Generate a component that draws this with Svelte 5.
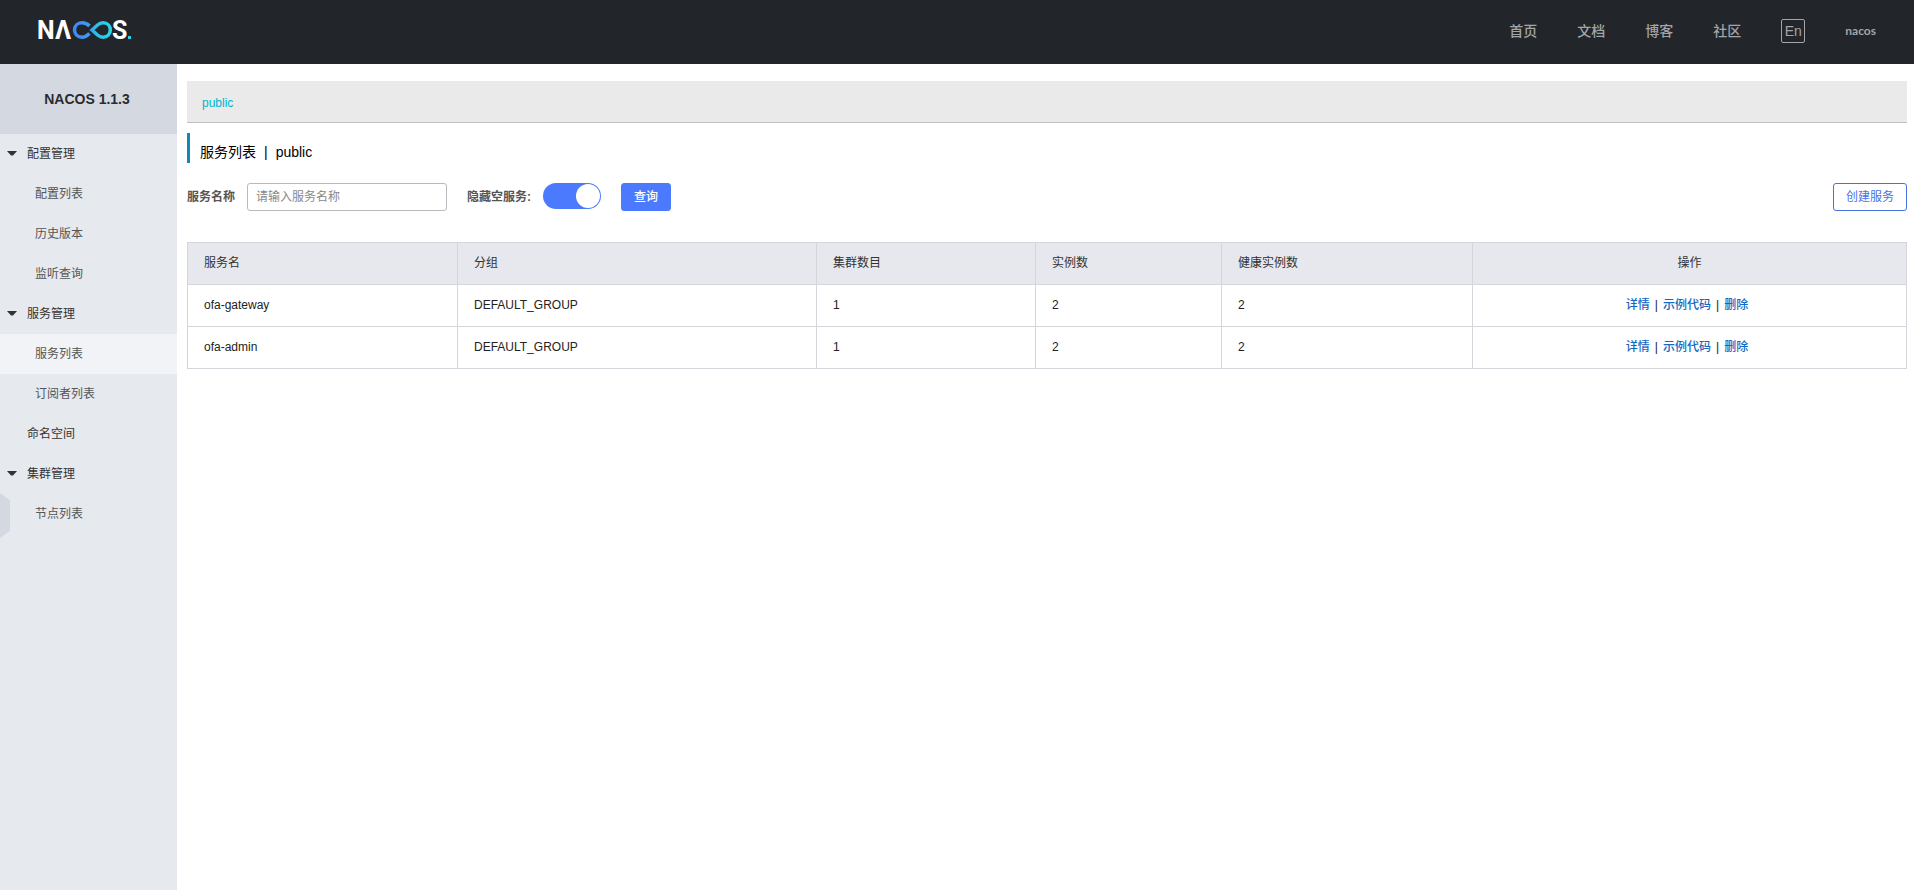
<script lang="ts">
  interface MenuItem {
    label: string;
    children?: string[];
  }

  interface Service {
    name: string;
    group: string;
    clusters: number;
    instances: number;
    healthy: number;
  }

  const nav = ['首页', '文档', '博客', '社区'];

  const menu: MenuItem[] = [
    { label: '配置管理', children: ['配置列表', '历史版本', '监听查询'] },
    { label: '服务管理', children: ['服务列表', '订阅者列表'] },
    { label: '命名空间' },
    { label: '集群管理', children: ['节点列表'] },
  ];

  const services: Service[] = [
    { name: 'ofa-gateway', group: 'DEFAULT_GROUP', clusters: 1, instances: 2, healthy: 2 },
    { name: 'ofa-admin', group: 'DEFAULT_GROUP', clusters: 1, instances: 2, healthy: 2 },
  ];

  let current = $state('服务列表');
  let keyword = $state('');
  let hideEmpty = $state(true);
</script>

<header class="header">
  <a class="logo" href="#home" aria-label="Nacos">
    <svg width="104" height="40" viewBox="-4 -8 104 40">
      <defs>
        <linearGradient id="loop" gradientUnits="userSpaceOnUse" x1="35" y1="0" x2="74" y2="0">
          <stop offset="0" stop-color="#4286f5" />
          <stop offset="0.45" stop-color="#3d9df2" />
          <stop offset="0.6" stop-color="#2bc0e8" />
          <stop offset="1" stop-color="#28d8ea" />
        </linearGradient>
      </defs>
      <text x="-1" y="20">N</text>
      <text x="17" y="20">Λ</text>
      <g fill="none" stroke="url(#loop)" stroke-width="3.500">
        <path d="M51.500 7C49 4.500 46.500 3.800 44 3.800C39.500 3.800 36.500 7 36.500 11S39.500 18.200 44 18.200C46.700 18.200 49 17 51.500 14.500" />
        <path d="M54 11L59.500 6C61.300 4.500 62.800 3.800 65 3.800C69.500 3.800 72.300 7 72.300 11S69.500 18.200 65 18.200C62.800 18.200 61.300 17.500 59.500 16Z" />
      </g>
      <text x="74" y="20">S</text>
      <rect x="90" y="17" width="3" height="3" fill="#28d8ea" />
    </svg>
  </a>
  <nav class="nav">
    {#each nav as label}
      <a href="#nav">{label}</a>
    {/each}
    <button class="lang" type="button">En</button>
    <a class="user" href="#user">nacos</a>
  </nav>
</header>

<div class="layout">
  <aside class="sidebar">
    <h1>NACOS 1.1.3</h1>
    <ul>
      {#each menu as item}
        <li>
          <a class="item" href="#menu">
            <span class="caret" class:open={item.children}></span>{item.label}
          </a>
          {#if item.children}
            <ul>
              {#each item.children as child}
                <li>
                  <a
                    class="item sub"
                    class:active={child === current}
                    href="#menu"
                    onclick={() => (current = child)}>{child}</a>
                </li>
              {/each}
            </ul>
          {/if}
        </li>
      {/each}
    </ul>
    <button class="handle" type="button" aria-label="收起"></button>
  </aside>

  <main>
    <div class="namespaces"><a href="#public">public</a></div>

    <h2><span>服务列表</span><span>|</span><span>public</span></h2>

    <form class="filters">
      <label for="service-name">服务名称</label>
      <input id="service-name" class="text" type="text" placeholder="请输入服务名称" bind:value={keyword} />
      <label for="hide-empty">隐藏空服务:</label>
      <input id="hide-empty" class="switch" type="checkbox" role="switch" bind:checked={hideEmpty} />
      <button class="btn primary" type="button">查询</button>
      <button class="btn create" type="button">创建服务</button>
    </form>

    <table>
      <colgroup>
        <col class="c-name" />
        <col class="c-group" />
        <col class="c-clusters" />
        <col class="c-instances" />
        <col class="c-healthy" />
        <col class="c-actions" />
      </colgroup>
      <thead>
        <tr>
          <th>服务名</th>
          <th>分组</th>
          <th>集群数目</th>
          <th>实例数</th>
          <th>健康实例数</th>
          <th class="actions">操作</th>
        </tr>
      </thead>
      <tbody>
        {#each services as service}
          <tr>
            <td>{service.name}</td>
            <td>{service.group}</td>
            <td>{service.clusters}</td>
            <td>{service.instances}</td>
            <td>{service.healthy}</td>
            <td class="actions">
              <a href="#detail">详情</a><span>|</span><a href="#code">示例代码</a><span>|</span><a href="#delete">删除</a>
            </td>
          </tr>
        {/each}
      </tbody>
    </table>
  </main>
</div>

<style>
  :global(body) {
    background: #fff;
    color: #333;
    font: 12px/18px 'Liberation Sans', 'Noto Sans CJK SC', sans-serif;
  }

  a {
    color: inherit;
    text-decoration: none;
  }

  button,
  input {
    box-sizing: border-box;
    margin: 0;
    font: inherit;
  }

  ul {
    list-style: none;
    margin: 0;
    padding: 0;
  }

  .header {
    display: flex;
    align-items: center;
    justify-content: space-between;
    box-sizing: border-box;
    height: 64px;
    padding: 0 38px 3px 34px;
    background: #22262a;
  }

  .logo svg {
    display: block;
  }

  .logo text {
    fill: #fff;
    font: 700 25px Roboto, sans-serif;
  }

  .nav {
    display: flex;
    align-items: center;
    gap: 40px;
    color: #a3a5a7;
    font-size: 14px;
    font-weight: 500;
  }

  .lang {
    width: 24px;
    height: 24px;
    padding: 0;
    border: 1px solid #a3a5a7;
    border-radius: 2px;
    background: none;
    color: inherit;
    line-height: 22px;
  }

  .user {
    font: 700 12px/18px Lato, sans-serif;
  }

  .layout {
    display: flex;
    min-height: calc(100vh - 64px);
  }

  .sidebar {
    position: relative;
    flex: 0 0 177px;
    background: #e6e9ee;
  }

  h1 {
    margin: 0;
    padding-right: 3px;
    background: #d4d8e0;
    color: #292c30;
    font-size: 14px;
    line-height: 70px;
    text-align: center;
  }

  .item {
    display: flex;
    align-items: center;
    height: 40px;
    padding-left: 7px;
  }

  .caret {
    width: 20px;
  }

  .caret.open::before {
    content: '';
    display: block;
    width: 10px;
    height: 5px;
    margin-bottom: 2px;
    background: #333;
    clip-path: polygon(0 0, 100% 0, 100% 10%, 60% 100%, 40% 100%, 0 10%);
  }

  .sub {
    padding-left: 35px;
    color: #555;
  }

  .sub.active {
    background: #f2f3f7;
  }

  /* sits on the window's left edge, over the menu */
  .handle {
    position: absolute;
    top: 429px;
    left: 0;
    width: 10px;
    height: 45px;
    padding: 0;
    border: 0;
    background: #d4d8e0;
    clip-path: polygon(0 0, 100% 16%, 100% 84%, 0 100%);
  }

  main {
    flex: 1;
    min-width: 0;
    padding: 17px 7px 0 10px;
  }

  .namespaces {
    padding: 3px 15px 0;
    border-bottom: 1px solid #c0c0c0;
    background: #eaeaea;
    color: #00b4cc;
    line-height: 38px;
  }

  h2 {
    display: flex;
    gap: 8px;
    height: 30px;
    margin: 10px 0 20px;
    padding-left: 10px;
    border-left: 3px solid #0d8bb5;
    color: #000;
    font-size: 14px;
    font-weight: 400;
    line-height: 38px;
  }

  .filters {
    display: flex;
    align-items: center;
    margin-bottom: 31px;
  }

  .filters label {
    margin-right: 12px;
    color: #555;
    font-weight: 700;
  }

  .text {
    width: 200px;
    height: 28px;
    margin-right: 20px;
    padding: 0 8px;
    border: 1px solid #b8bac0;
    border-radius: 3px;
    color: #333;
  }

  .text::placeholder {
    color: #888;
  }

  .switch {
    appearance: none;
    display: flex;
    align-self: flex-start;
    width: 58px;
    height: 26px;
    margin-right: 20px;
    padding: 1px;
    border-radius: 13px;
    background: #c4c6cf;
  }

  .switch::before {
    content: '';
    width: 24px;
    height: 24px;
    border-radius: 50%;
    background: #fff;
  }

  .switch:checked {
    justify-content: flex-end;
    background: #4c7aff;
  }

  .btn {
    height: 28px;
    padding: 0 12px;
    border: 1px solid #4c7aff;
    border-radius: 3px;
    background: #fff;
    color: #4c7aff;
  }

  .primary {
    background: #4c7aff;
    color: #fff;
    font-weight: 500;
  }

  .create {
    margin-left: auto;
    border-color: #4a72d8;
    color: #4a72e8;
  }

  table {
    width: 100%;
    table-layout: fixed;
    border-collapse: collapse;
  }

  .c-name { width: 270px; }
  .c-group { width: 359px; }
  .c-clusters { width: 219px; }
  .c-instances { width: 186px; }
  .c-healthy { width: 251px; }
  .c-actions { width: 434px; }

  th,
  td {
    height: 39px;
    padding: 0 16px 2px;
    border: 1px solid #d5d6dc;
    text-align: left;
  }

  th {
    background: #e7e8ed;
    font-weight: 400;
  }

  td {
    color: #222;
  }

  .actions {
    text-align: center;
  }

  td a,
  td span {
    margin-right: 5px;
  }

  td a {
    color: #1468c4;
    font-weight: 500;
  }
</style>
